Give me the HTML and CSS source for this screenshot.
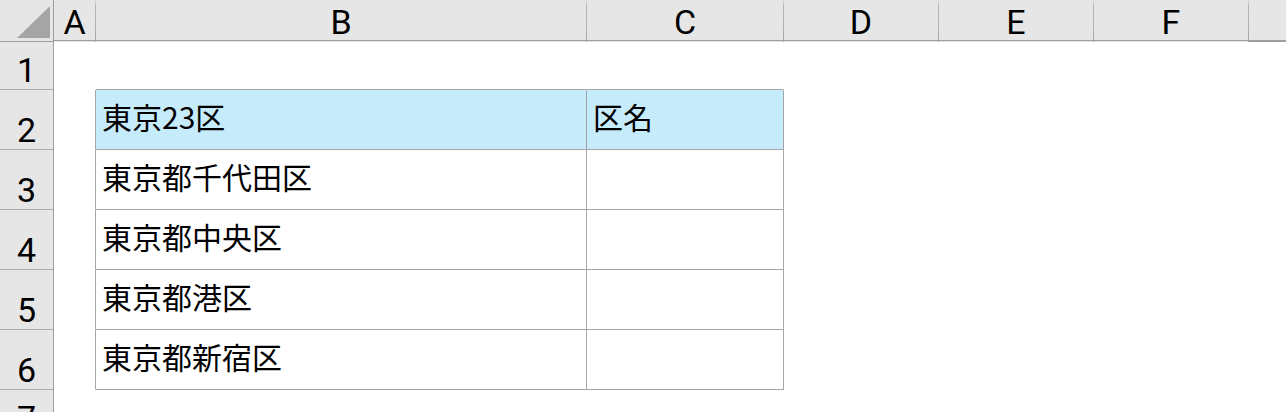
FILE: index.html
```html
<!DOCTYPE html>
<html lang="ja">
<head>
<meta charset="utf-8">
<title>Sheet</title>
<link rel="stylesheet" href="styles.css">
</head>
<body>
<div class="sheet">
  <div class="corner"><svg width="53" height="41" viewBox="0 0 53 41"><polygon points="50,6 50,38 17,38" fill="#a5a5a5"/></svg></div>
  <div class="ch">A</div>
  <div class="ch">B</div>
  <div class="ch">C</div>
  <div class="ch">D</div>
  <div class="ch">E</div>
  <div class="ch">F</div>
  <div class="ch last"></div>

  <div class="rh">1</div>
  <div class="c"></div>
  <div class="c tb"></div>
  <div class="c tb"></div>
  <div class="c"></div>
  <div class="c"></div>
  <div class="c"></div>
  <div class="c"></div>

  <div class="rh tall">2</div>
  <div class="c tl"></div>
  <div class="c t hd">東京23区</div>
  <div class="c t hd">区名</div>
  <div class="c"></div>
  <div class="c"></div>
  <div class="c"></div>
  <div class="c"></div>

  <div class="rh tall">3</div>
  <div class="c tl"></div>
  <div class="c t">東京都千代田区</div>
  <div class="c t"></div>
  <div class="c"></div>
  <div class="c"></div>
  <div class="c"></div>
  <div class="c"></div>

  <div class="rh tall">4</div>
  <div class="c tl"></div>
  <div class="c t">東京都中央区</div>
  <div class="c t"></div>
  <div class="c"></div>
  <div class="c"></div>
  <div class="c"></div>
  <div class="c"></div>

  <div class="rh tall">5</div>
  <div class="c tl"></div>
  <div class="c t">東京都港区</div>
  <div class="c t"></div>
  <div class="c"></div>
  <div class="c"></div>
  <div class="c"></div>
  <div class="c"></div>

  <div class="rh tall">6</div>
  <div class="c tl"></div>
  <div class="c t">東京都新宿区</div>
  <div class="c t"></div>
  <div class="c"></div>
  <div class="c"></div>
  <div class="c"></div>
  <div class="c"></div>

  <div class="rh">7</div>
  <div class="c"></div>
  <div class="c"></div>
  <div class="c"></div>
  <div class="c"></div>
  <div class="c"></div>
  <div class="c"></div>
  <div class="c"></div>
</div>
</body>
</html>
```
FILE: styles.css
```css
html, body {
  margin: 0;
  padding: 0;
  background: #ffffff;
  overflow: hidden;
}
.sheet {
  display: grid;
  grid-template-columns: 54px 42px 491px 197px 155px 155px 155px 1fr;
  grid-template-rows: 42px 48px 60px 60px 60px 60px 60px 48px;
  width: 1286px;
  height: 412px;
  overflow: hidden;
}
.sheet > div {
  box-sizing: border-box;
}
.corner {
  background: #e6e6e6;
  border-right: 1px solid #9e9e9e;
  border-bottom: 1px solid #9e9e9e;
}
.corner svg {
  display: block;
}
.ch {
  background: #e6e6e6;
  border-bottom: 1px solid #9e9e9e;
  border-right: 1px solid transparent;
  border-image: linear-gradient(to bottom, #e6e6e6 0px, #b8b8b8 6px, #a8a8a8 100%) 1;
  border-image-width: 0 1px 0 0;
  box-shadow: inset 0 -1px 0 #9e9e9e;
  display: flex;
  align-items: flex-start;
  justify-content: center;
  font-family: Roboto, "Noto Sans", sans-serif;
  font-size: 34px;
  color: #000;
  padding-top: 2px;
}
.ch.last {
  border-image: none;
  border-right: none;
}
.rh {
  background: #e6e6e6;
  border-right: 1px solid #9e9e9e;
  border-bottom: 1px solid #ababab;
  display: flex;
  align-items: flex-start;
  justify-content: center;
  font-family: Roboto, "Noto Sans", sans-serif;
  font-size: 34px;
  color: #000;
  padding-top: 8px;
}
.rh.tall {
  padding-top: 20px;
}
.c {
  border-right: 1px solid transparent;
  border-bottom: 1px solid transparent;
  font-family: "Noto Sans CJK JP", "Noto Sans", sans-serif;
  font-size: 30px;
  color: #000;
  display: flex;
  align-items: center;
  padding-left: 6px;
  padding-bottom: 8px;
  white-space: nowrap;
}
.c.tb {
  border-bottom-color: #a6a6a6;
}
.c.tl {
  border-right-color: #a6a6a6;
}
.c.t {
  border-right-color: #a6a6a6;
  border-bottom-color: #a6a6a6;
}
.c.hd {
  background: #c6ebfa;
}
```
